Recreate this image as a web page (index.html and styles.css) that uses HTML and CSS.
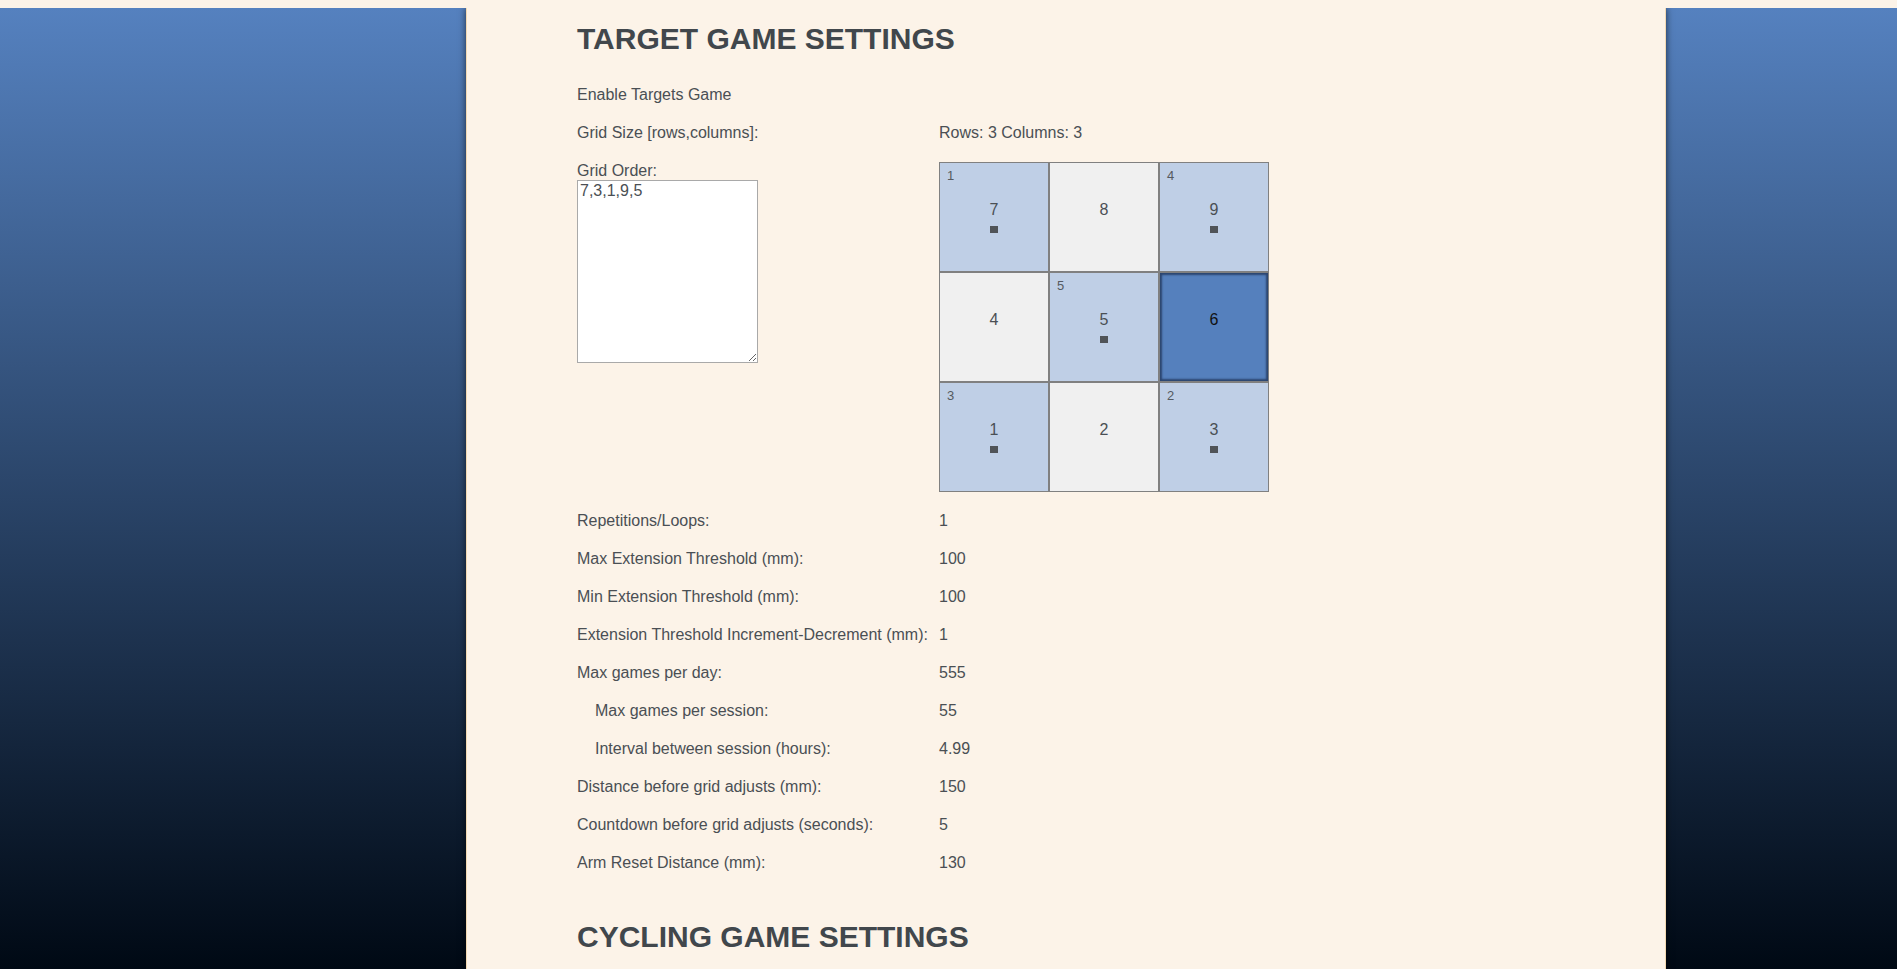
FILE: index.html
```html
<!DOCTYPE html>
<html>
<head>
<meta charset="utf-8">
<title>Target Game Settings</title>
<link rel="stylesheet" href="styles.css">
</head>
<body>
<div class="backdrop">
  <main class="panel">
    <h2 class="section-title">TARGET GAME SETTINGS</h2>
    <div class="settings">
      <div class="row"><div class="label">Enable Targets Game</div><div class="value"></div></div>
      <div class="row"><div class="label">Grid Size [rows,columns]:</div><div class="value">Rows: 3 Columns: 3</div></div>
      <div class="row row-grid">
        <div class="label">
          <div class="label-text">Grid Order:</div>
          <textarea class="order-input">7,3,1,9,5</textarea>
        </div>
        <div class="value">
          <div class="target-grid">
            <div class="cell cell-on"><span class="order">1</span><span class="num">7</span><span class="mark"></span></div>
            <div class="cell"><span class="num">8</span></div>
            <div class="cell cell-on"><span class="order">4</span><span class="num">9</span><span class="mark"></span></div>
            <div class="cell"><span class="num">4</span></div>
            <div class="cell cell-on"><span class="order">5</span><span class="num">5</span><span class="mark"></span></div>
            <div class="cell cell-active"><span class="num">6</span></div>
            <div class="cell cell-on"><span class="order">3</span><span class="num">1</span><span class="mark"></span></div>
            <div class="cell"><span class="num">2</span></div>
            <div class="cell cell-on"><span class="order">2</span><span class="num">3</span><span class="mark"></span></div>
          </div>
        </div>
      </div>
      <div class="row"><div class="label">Repetitions/Loops:</div><div class="value">1</div></div>
      <div class="row"><div class="label">Max Extension Threshold (mm):</div><div class="value">100</div></div>
      <div class="row"><div class="label">Min Extension Threshold (mm):</div><div class="value">100</div></div>
      <div class="row"><div class="label">Extension Threshold Increment-Decrement (mm):</div><div class="value">1</div></div>
      <div class="row"><div class="label">Max games per day:</div><div class="value">555</div></div>
      <div class="row"><div class="label sub">Max games per session:</div><div class="value">55</div></div>
      <div class="row"><div class="label sub">Interval between session (hours):</div><div class="value">4.99</div></div>
      <div class="row"><div class="label">Distance before grid adjusts (mm):</div><div class="value">150</div></div>
      <div class="row"><div class="label">Countdown before grid adjusts (seconds):</div><div class="value">5</div></div>
      <div class="row"><div class="label">Arm Reset Distance (mm):</div><div class="value">130</div></div>
    </div>
    <h2 class="section-title section-next">CYCLING GAME SETTINGS</h2>
  </main>
</div>
</body>
</html>
```
FILE: styles.css
```css
html, body {
  margin: 0;
  padding: 0;
  background: #fcf3e8;
  overflow: hidden;
}
body {
  padding-top: 8px;
  font-family: "Liberation Sans", Arial, sans-serif;
  font-size: 16px;
  color: #4a4f54;
}
.backdrop {
  height: calc(100vh - 8px);
  background: linear-gradient(#5581bf, #000914);
  overflow: hidden;
}
.panel {
  margin-left: 466px;
  width: 1200px;
  height: 100%;
  background: #fcf3e8;
  border-left: 1px solid #f3d9b2;
  border-right: 1px solid #f3d9b2;
  box-shadow: 0 0 7px rgba(0, 0, 0, 0.65);
  padding: 14px 0 0 110px;
  box-sizing: border-box;
}
.section-title {
  margin: 0 0 20px 0;
  font-size: 30px;
  line-height: 34px;
  font-weight: bold;
  color: #41474c;
}
.section-next {
  margin-top: 38px;
}
.settings {
  display: flex;
  flex-direction: column;
}
.row {
  display: grid;
  grid-template-columns: 362px auto;
  line-height: 38px;
}
.label.sub {
  padding-left: 18px;
}
.row-grid {
  line-height: 18px;
  padding: 10px 0;
}
.label-text {
  line-height: 18px;
}
.order-input {
  display: block;
  width: 181px;
  height: 183px;
  box-sizing: border-box;
  margin: 0;
  padding: 1px 2px;
  border: 1px solid #a9a9a9;
  background: #fff;
  font-family: "Liberation Sans", Arial, sans-serif;
  font-size: 16px;
  line-height: 18px;
  color: #4a4f54;
}
.target-grid {
  display: grid;
  grid-template-columns: repeat(3, 110px);
  grid-template-rows: repeat(3, 110px);
}
.cell {
  position: relative;
  box-sizing: border-box;
  border: 1px solid #808080;
  background: #f0f0f0;
  display: flex;
  flex-direction: column;
  align-items: center;
  padding-top: 38px;
}
.cell-on {
  background: #bfcfe6;
}
.cell-active {
  background: #5580bd;
  box-shadow: inset 0 0 2px 2px rgba(30, 50, 85, 0.75);
}
.cell-active .num {
  color: #111;
}
.order {
  position: absolute;
  left: 7px;
  top: 5px;
  font-size: 13px;
  line-height: 15px;
  color: #555a60;
}
.num {
  font-size: 16px;
  line-height: 18px;
  color: #4a4f54;
}
.mark {
  width: 8px;
  height: 7px;
  margin-top: 7px;
  background: #505458;
}
```
